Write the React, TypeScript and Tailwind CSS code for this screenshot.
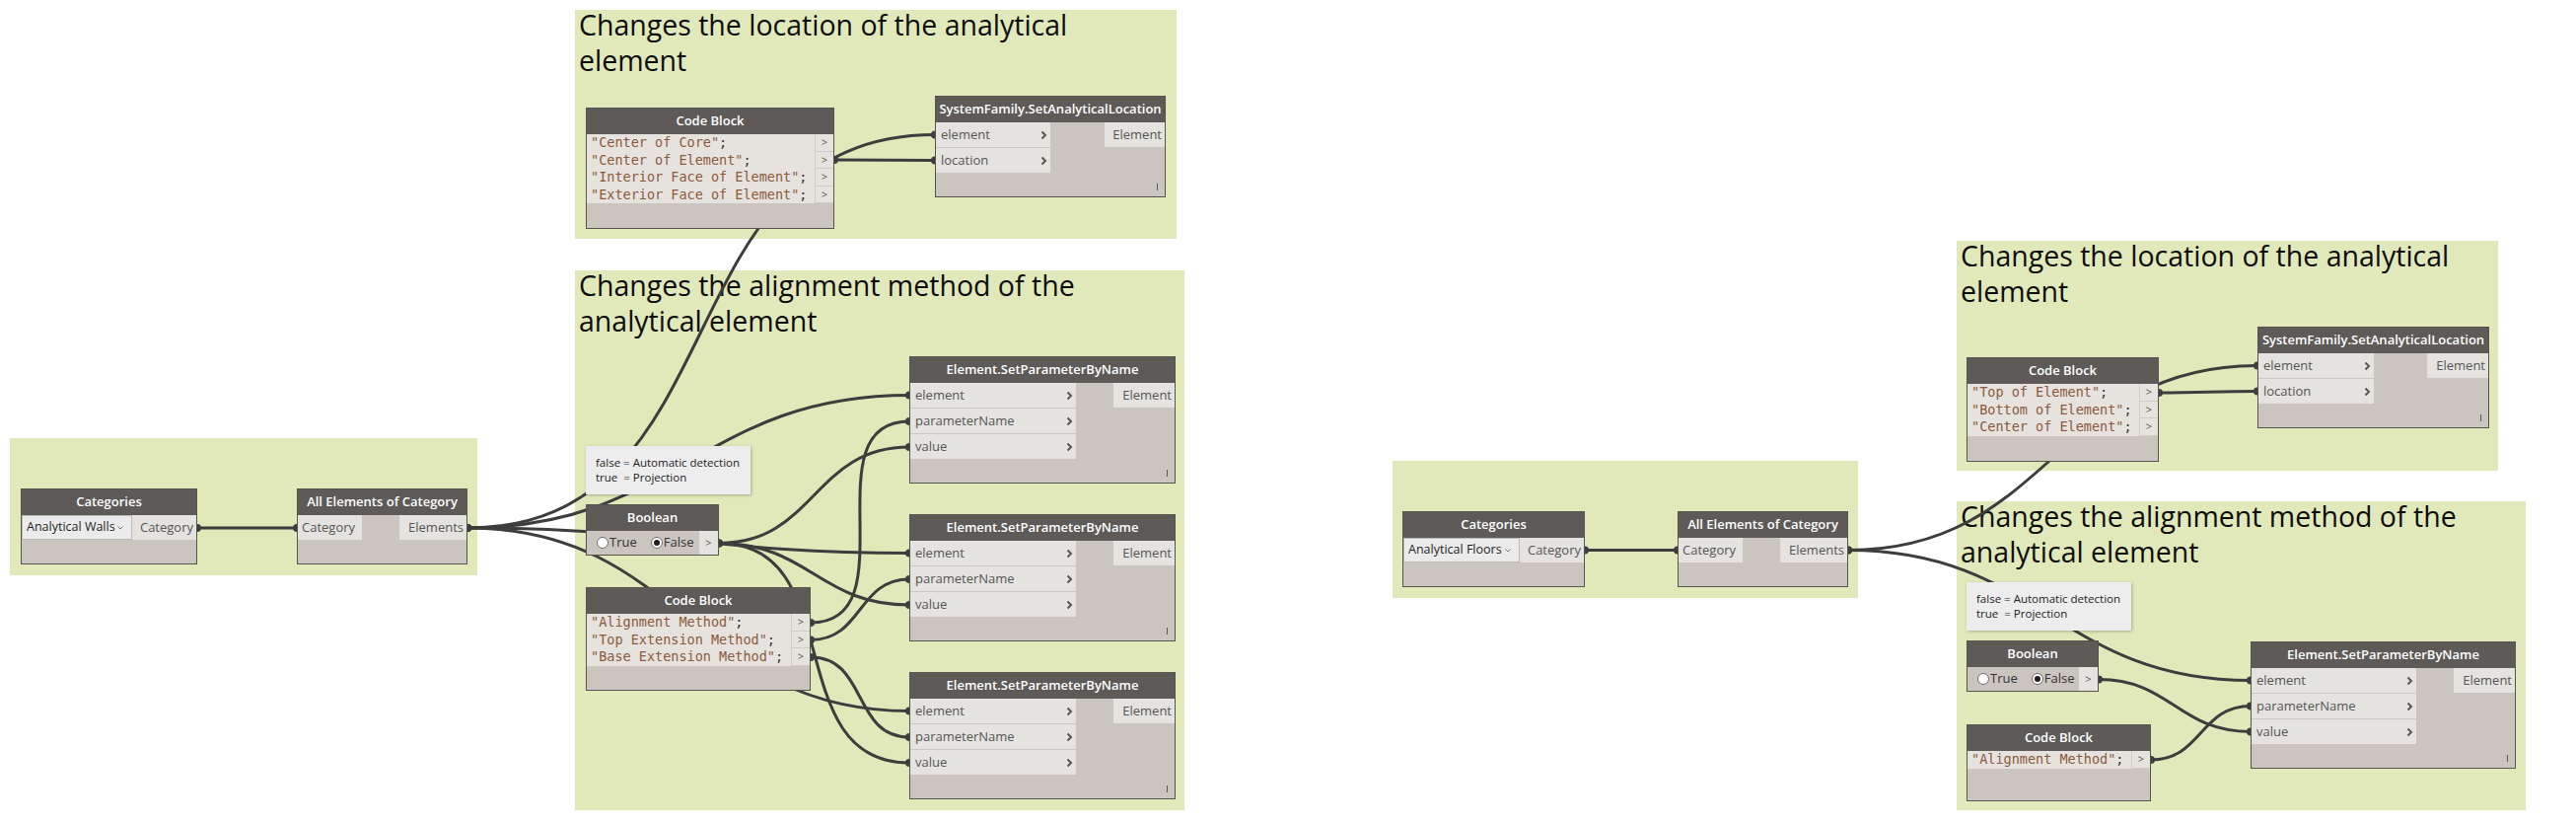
import React from "react";

type Pt = [number, number];

// wires go from an output port to an input port, in page pixels
const wires: [Pt, Pt][] = [
  // left graph
  [[200, 535], [301, 535]],
  [[474, 535], [948, 136.5]],
  [[846, 162], [948, 162.5]],
  [[474, 535], [922, 400.5]],
  [[474, 535], [922, 560.5]],
  [[474, 535], [922, 720.5]],
  [[729, 550.5], [922, 453]],
  [[729, 550.5], [922, 613]],
  [[729, 550.5], [922, 773]],
  [[822, 631], [922, 427]],
  [[822, 648.5], [922, 587]],
  [[822, 666], [922, 747]],
  // right graph
  [[1607, 557.5], [1701, 557.5]],
  [[1874, 557.5], [2289, 370.5]],
  [[2189, 398], [2289, 396.5]],
  [[1874, 557.5], [2282, 689.5]],
  [[2128, 688.5], [2282, 741.5]],
  [[2181, 770], [2282, 715.5]],
];

function wirePath([x1, y1]: Pt, [x2, y2]: Pt) {
  const d = Math.hypot(x2 - x1, y2 - y1) * 0.45;
  return `M${x1} ${y1} C${x1 + d} ${y1} ${x2 - d} ${y2} ${x2} ${y2}`;
}

const Chevron = () => (
  <svg width="7" height="10" viewBox="0 0 7 10" className="shrink-0">
    <path d="M1.5 1.5 L5 5 L1.5 8.5" fill="none" stroke="#5a5755" strokeWidth="2" />
  </svg>
);

function Header({ title }: { title: string }) {
  return (
    <div className="flex h-[26px] shrink-0 items-center justify-center bg-[#5d5a57] text-[13px] font-semibold whitespace-nowrap text-white">
      {title}
    </div>
  );
}

function Lacing() {
  return <div className="absolute right-[7px] bottom-[6px] h-[7px] w-[1px] bg-[#5a5755]" />;
}

function Group({ pos, title }: { pos: string; title?: string[] }) {
  return (
    <div className={`absolute bg-[#e1e9bb] ${pos}`}>
      {title && (
        <div className="mt-[-3px] pl-[4px] text-[28.5px] leading-[36px] text-[#0d0d0d]">
          {title.map((line) => (
            <div key={line} className="whitespace-nowrap">
              {line}
            </div>
          ))}
        </div>
      )}
    </div>
  );
}

function FnNode({
  pos,
  title,
  inputs,
  inCol,
  output,
  outCol,
}: {
  pos: string;
  title: string;
  inputs: string[];
  inCol: string;
  output: string;
  outCol: string;
}) {
  return (
    <div className={`absolute flex flex-col border border-[#57534f] bg-[#cac5bf] ${pos}`}>
      <Header title={title} />
      <div className="flex justify-between">
        <div className={`flex flex-col gap-[1px] ${inCol}`}>
          {inputs.map((name) => (
            <div
              key={name}
              className="flex h-[25px] items-center justify-between bg-[#e5e3df] pr-[3px] pl-[5px] text-[13px] text-[#555]"
            >
              {name}
              <Chevron />
            </div>
          ))}
        </div>
        <div className={`flex h-[25px] items-center justify-end bg-[#e5e3df] pr-[3px] text-[13px] text-[#555] ${outCol}`}>
          {output}
        </div>
      </div>
      <Lacing />
    </div>
  );
}

function AllElements({ pos }: { pos: string }) {
  return (
    <div className={`absolute flex flex-col border border-[#57534f] bg-[#cac5bf] ${pos}`}>
      <Header title="All Elements of Category" />
      <div className="flex justify-between">
        <div className="flex h-[25px] w-[65px] items-center bg-[#e5e3df] pl-[4px] text-[13px] text-[#555]">Category</div>
        <div className="flex h-[25px] w-[68px] items-center justify-end bg-[#e5e3df] pr-[3px] text-[13px] text-[#555]">
          Elements
        </div>
      </div>
    </div>
  );
}

function Categories({ pos, value, dropW }: { pos: string; value: string; dropW: string }) {
  return (
    <div className={`absolute flex flex-col border border-[#57534f] bg-[#cac5bf] ${pos}`}>
      <Header title="Categories" />
      <div className="flex h-[25px]">
        <div
          className={`flex items-center justify-between border border-[#bdbab6] bg-[#ebebeb] pr-[8px] pl-[4px] text-[12.5px] whitespace-nowrap text-[#1e1e1e] ${dropW}`}
        >
          {value}
          <svg width="6" height="4" viewBox="0 0 6 4">
            <path d="M0.5 0.5 L3 3 L5.5 0.5" fill="none" stroke="#777" strokeWidth="1" />
          </svg>
        </div>
        <div className="flex flex-1 items-center justify-end bg-[#e5e3df] pr-[3px] text-[13px] text-[#555]">Category</div>
      </div>
    </div>
  );
}

function Radio({ checked }: { checked?: boolean }) {
  return (
    <span className="flex h-[12px] w-[12px] items-center justify-center rounded-full border border-[#6f6f6f] bg-white">
      {checked && <span className="h-[6px] w-[6px] rounded-full bg-[#1e1e1e]" />}
    </span>
  );
}

function BooleanNode({ pos }: { pos: string }) {
  return (
    <div className={`absolute flex flex-col border border-[#57534f] bg-[#cac5bf] ${pos}`}>
      <Header title="Boolean" />
      <div className="flex h-[24px] items-center">
        <div className="flex flex-1 items-center pl-[10px] text-[13px] text-[#333]">
          <Radio />
          <span className="ml-[1px]">True</span>
          <span className="ml-[14px]">
            <Radio checked />
          </span>
          <span className="ml-[1px]">False</span>
        </div>
        <div className="flex h-full w-[19px] items-center justify-center bg-[#e5e3df] text-[11px] text-[#555]">&gt;</div>
      </div>
    </div>
  );
}

function CodeBlock({ pos, lines }: { pos: string; lines: string[] }) {
  return (
    <div className={`absolute flex flex-col border border-[#57534f] bg-[#cac5bf] ${pos}`}>
      <Header title="Code Block" />
      <div className="flex">
        <div className="flex flex-1 flex-col bg-[#e6e3df] pl-[4px]">
          {lines.map((line) => (
            <div
              key={line}
              className="h-[17.5px] font-['DejaVu_Sans_Mono',monospace] text-[13.5px] leading-[17.5px] whitespace-pre"
            >
              <span className="text-[#8b5a3c]">"{line}"</span>
              <span className="text-[#333]">;</span>
            </div>
          ))}
        </div>
        <div className="flex w-[19px] flex-col">
          {lines.map((line) => (
            <div
              key={line}
              className="flex h-[17.5px] items-center justify-center border-b border-l border-[#cfcbc5] bg-[#e6e3df] text-[11px] text-[#555]"
            >
              &gt;
            </div>
          ))}
        </div>
      </div>
    </div>
  );
}

function Note({ pos }: { pos: string }) {
  return (
    <div
      className={`absolute bg-[#ededed] pt-[9px] pl-[10px] text-[11.5px] leading-[15px] text-[#222] shadow-[1px_1px_3px_rgba(0,0,0,0.25)] ${pos}`}
    >
      <div className="whitespace-pre">false = Automatic detection</div>
      <div className="whitespace-pre">true  = Projection</div>
    </div>
  );
}

const espInputs = ["element", "parameterName", "value"];
const sysInputs = ["element", "location"];

export default function App() {
  const ends: Pt[] = wires.flat();

  return (
    <div className="relative h-[834px] w-[2612px] overflow-hidden bg-white font-['Open_Sans',sans-serif]">
      {/* groups */}
      <Group pos="left-[583px] top-[10px] h-[232px] w-[610px]" title={["Changes the location of the analytical", "element"]} />
      <Group
        pos="left-[583px] top-[274px] h-[547px] w-[618px]"
        title={["Changes the alignment method of the", "analytical element"]}
      />
      <Group pos="left-[10px] top-[444px] h-[139px] w-[474px]" />
      <Group pos="left-[1412px] top-[467px] h-[139px] w-[472px]" />
      <Group pos="left-[1984px] top-[244px] h-[233px] w-[549px]" title={["Changes the location of the analytical", "element"]} />
      <Group
        pos="left-[1984px] top-[508px] h-[313px] w-[577px]"
        title={["Changes the alignment method of the", "analytical element"]}
      />

      {/* wires */}
      <svg className="pointer-events-none absolute top-0 left-0" width="2612" height="834">
        {wires.map(([a, b], i) => (
          <path key={i} d={wirePath(a, b)} fill="none" stroke="#3d3d3d" strokeWidth="3" />
        ))}
        {ends.map(([x, y], i) => (
          <circle key={i} cx={x} cy={y} r="4" fill="#3d3d3d" />
        ))}
      </svg>

      {/* left graph */}
      <Categories pos="left-[21px] top-[495px] h-[77px] w-[179px]" value="Analytical Walls" dropW="w-[112px]" />
      <AllElements pos="left-[301px] top-[495px] h-[77px] w-[173px]" />
      <CodeBlock
        pos="left-[594px] top-[109px] h-[123px] w-[252px]"
        lines={["Center of Core", "Center of Element", "Interior Face of Element", "Exterior Face of Element"]}
      />
      <FnNode
        pos="left-[948px] top-[97px] h-[103px] w-[234px]"
        title="SystemFamily.SetAnalyticalLocation"
        inputs={sysInputs}
        inCol="w-[116px]"
        output="Element"
        outCol="w-[61px]"
      />
      <Note pos="left-[594px] top-[452px] h-[49px] w-[167px]" />
      <BooleanNode pos="left-[594px] top-[511px] h-[52px] w-[135px]" />
      <CodeBlock
        pos="left-[594px] top-[595px] h-[105px] w-[228px]"
        lines={["Alignment Method", "Top Extension Method", "Base Extension Method"]}
      />
      <FnNode
        pos="left-[922px] top-[361px] h-[129px] w-[270px]"
        title="Element.SetParameterByName"
        inputs={espInputs}
        inCol="w-[168px]"
        output="Element"
        outCol="w-[62px]"
      />
      <FnNode
        pos="left-[922px] top-[521px] h-[129px] w-[270px]"
        title="Element.SetParameterByName"
        inputs={espInputs}
        inCol="w-[168px]"
        output="Element"
        outCol="w-[62px]"
      />
      <FnNode
        pos="left-[922px] top-[681px] h-[129px] w-[270px]"
        title="Element.SetParameterByName"
        inputs={espInputs}
        inCol="w-[168px]"
        output="Element"
        outCol="w-[62px]"
      />

      {/* right graph */}
      <Categories pos="left-[1422px] top-[518px] h-[77px] w-[185px]" value="Analytical Floors" dropW="w-[118px]" />
      <AllElements pos="left-[1701px] top-[518px] h-[77px] w-[173px]" />
      <CodeBlock
        pos="left-[1994px] top-[362px] h-[106px] w-[195px]"
        lines={["Top of Element", "Bottom of Element", "Center of Element"]}
      />
      <FnNode
        pos="left-[2289px] top-[331px] h-[103px] w-[235px]"
        title="SystemFamily.SetAnalyticalLocation"
        inputs={sysInputs}
        inCol="w-[117px]"
        output="Element"
        outCol="w-[62px]"
      />
      <Note pos="left-[1994px] top-[590px] h-[49px] w-[167px]" />
      <BooleanNode pos="left-[1994px] top-[649px] h-[52px] w-[134px]" />
      <CodeBlock pos="left-[1994px] top-[734px] h-[78px] w-[187px]" lines={["Alignment Method"]} />
      <FnNode
        pos="left-[2282px] top-[650px] h-[129px] w-[269px]"
        title="Element.SetParameterByName"
        inputs={espInputs}
        inCol="w-[167px]"
        output="Element"
        outCol="w-[62px]"
      />
    </div>
  );
}
